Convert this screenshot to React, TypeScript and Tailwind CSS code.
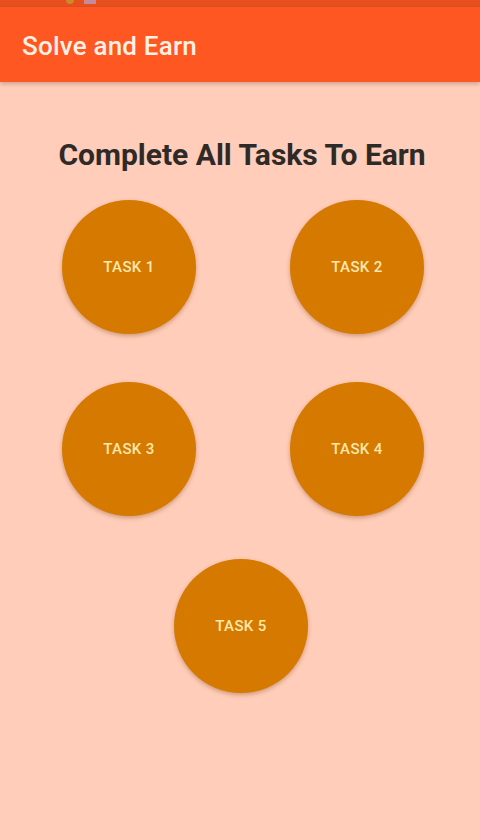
function TaskButton({ label }: { label: string }) {
  return (
    <button className="w-[134px] h-[134px] rounded-full bg-[#d57900] text-[#fde8ac] text-[15px] font-medium tracking-wide shadow-[0_2px_4px_rgba(120,60,0,0.35)] flex items-center justify-center">
      {label}
    </button>
  );
}

export default function App() {
  return (
    <div className="w-[480px] h-[840px] bg-[#ffcdb9] flex flex-col font-['Roboto',sans-serif] overflow-hidden">
      {/* status bar, mostly cut off */}
      <div className="h-[7px] bg-[#e5501e] flex items-start pl-[66px] gap-[10px]">
        <div className="w-[8px] h-[4px] rounded-b-full bg-[#c98a2a]" />
        <div className="w-[12px] h-[4px] bg-[#c88a9a]" />
      </div>

      <header className="h-[75px] bg-[#ff5722] flex items-center px-[22px] pt-[3px] shadow-[0_2px_4px_rgba(0,0,0,0.2)]">
        <h1 className="text-[26px] font-medium text-[#fdf0e4] tracking-[0.2px]">Solve and Earn</h1>
      </header>

      <main className="flex flex-col items-stretch">
        <h2 className="mt-[54px] text-center text-[30px] font-bold text-[#2e2a28] leading-[38px] pl-[4px]">
          Complete All Tasks To Earn
        </h2>

        <div className="mt-[26px] flex justify-between pl-[62px] pr-[56px]">
          <TaskButton label="TASK 1" />
          <TaskButton label="TASK 2" />
        </div>

        <div className="mt-[48px] flex justify-between pl-[62px] pr-[56px]">
          <TaskButton label="TASK 3" />
          <TaskButton label="TASK 4" />
        </div>

        <div className="mt-[43px] flex justify-center pl-[2px]">
          <TaskButton label="TASK 5" />
        </div>
      </main>
    </div>
  );
}
